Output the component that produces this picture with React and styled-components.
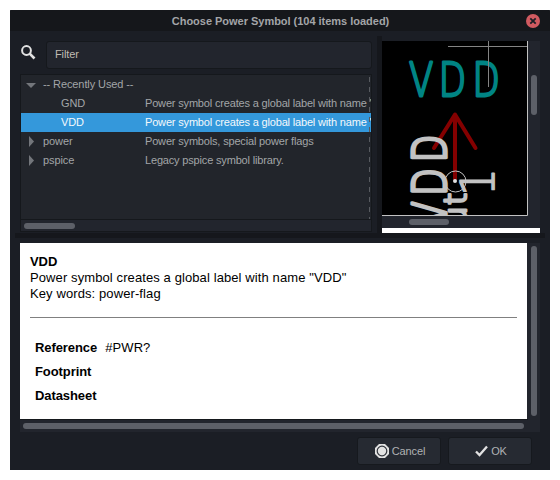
import React from "react";
import styled, { createGlobalStyle } from "styled-components";

const GlobalStyle = createGlobalStyle`
  * { box-sizing: border-box; }
  body {
    margin: 0;
    background: #fff;
    font-family: "Liberation Sans", Arial, sans-serif;
    font-size: 11px;
    color: #a3a5a8;
  }
  svg { display: block; flex: none; }
`;

const Window = styled.main`
  width: 540px;
  height: 460px;
  margin: 10px;
  display: flex;
  flex-direction: column;
  background: #1b1e25;
  border-radius: 1px 1px 0 0;
  overflow: hidden;
`;

const TitleBar = styled.header`
  height: 21px;
  flex: none;
  display: grid;
  grid-template-columns: 24px 1fr 24px;
  align-items: center;
  background: #15171b;
`;

const Title = styled.h1`
  grid-column: 2;
  margin: 0;
  padding: 1px 0 0 1px;
  font-size: 11px;
  line-height: 20px;
  letter-spacing: -0.02px;
  text-align: center;
  white-space: nowrap;
`;

const CloseButton = styled.button`
  width: 14px;
  height: 14px;
  padding: 0;
  border: 0;
  border-radius: 50%;
  background: #d05a60;
`;

const Upper = styled.section`
  height: 202px;
  flex: none;
  display: flex;
  padding: 5px 10px 0;
`;

const Chooser = styled.div`
  width: 352px;
  padding-top: 5px;
  display: flex;
  flex-direction: column;
`;

const FilterRow = styled.div`
  display: flex;
  height: 28px;
  margin-bottom: 5px;
`;

const SearchSlot = styled.div`
  width: 26px;
  padding: 4px 0 0 1px;
`;

const Filter = styled.input`
  flex: 1;
  min-width: 0;
  padding: 0 8px 2px;
  border: 1px solid #15181c;
  border-radius: 3px;
  outline: none;
  background: #22252d;
  color: #c0bcb2;
  font: 11px "Liberation Sans", Arial, sans-serif;
  letter-spacing: -0.12px;
`;

const Tree = styled.div`
  height: 158px;
  display: flex;
  flex-direction: column;
  border: 1px solid #15181c;
  background: #22252b;
  letter-spacing: -0.17px;
`;

const Rows = styled.div`
  position: relative;
  height: 144px;
`;

const ColumnEdge = styled.i`
  position: absolute;
  top: 2px;
  bottom: 0;
  right: 1px;
  width: 1px;
  background: repeating-linear-gradient(to bottom, #585b60 0 5px, transparent 5px 10px);
`;

const Row = styled.div`
  height: 19px;
  display: grid;
  grid-template-columns: 22px 102px 1fr;
  align-items: start;
  background: ${(p) => (p.$selected ? "#3498db" : "transparent")};
  color: ${(p) => (p.$selected ? "#f4f8fb" : "inherit")};
`;

const Name = styled.span`
  padding-left: ${(p) => (p.$child ? 18 : 0)}px;
  letter-spacing: ${(p) => (p.$child ? -0.17 : -0.1)}px;
  white-space: nowrap;
  line-height: 19px;
`;

const Description = styled.span`
  overflow: hidden;
  white-space: nowrap;
  line-height: 19px;
`;

const HScroll = styled.div`
  height: ${(p) => p.$h || 12}px;
  padding: ${(p) => p.$top || 3}px 0 0 ${(p) => p.$start}px;
  border-top: ${(p) => (p.$edge ? "1px solid #15181c" : "0")};
  background: #22252d;
`;

const VScroll = styled.div`
  width: 12px;
  flex: none;
  padding: ${(p) => p.$start}px 0 0 3px;
  background: #22252d;
`;

const Thumb = styled.div`
  width: ${(p) => p.$w || 6}px;
  height: ${(p) => p.$h || 6}px;
  border-radius: 3px;
  background: #5d6068;
`;

const VSplitter = styled.div`
  width: 5px;
  margin-left: 5px;
  background: #15171c;
`;

const HSplitter = styled.div`
  height: 5px;
  flex: none;
  margin: 0 5px;
  background: #15171c;
`;

const Preview = styled.div`
  width: 158px;
  padding-top: 5px;
`;

const PreviewBody = styled.div`
  display: flex;
  height: 187px;
  background: #22252d;
`;

const PreviewMain = styled.div`
  width: 146px;
`;

const PreviewFooter = styled.div`
  height: 5px;
  background: #fff;
`;

const DetailsFrame = styled.section`
  display: flex;
  height: 189px;
  flex: none;
  margin: 5px 10px 0;
  background: #22252d;
`;

const DetailsMain = styled.div`
  width: 508px;
`;

const Details = styled.article`
  width: 507px;
  height: 176px;
  padding: 11px 10px 0;
  background: #fff;
  color: #000;
  font-size: 13px;
  line-height: 16px;
`;

const Line = styled.div`
  font-weight: ${(p) => (p.$strong ? "bold" : "normal")};
  letter-spacing: ${(p) => (p.$strong ? -0.08 : 0.1)}px;
`;

const Rule = styled.hr`
  height: 1px;
  margin: 15px 0 22px;
  border: 0;
  background: #808080;
`;

const Field = styled.div`
  height: 24px;
  padding-left: 5px;
  display: flex;
  gap: 8px;
`;

const Actions = styled.footer`
  display: flex;
  justify-content: flex-end;
  gap: 7px;
  padding: 5px 18px 0 0;
`;

const Button = styled.button`
  width: 84px;
  height: 28px;
  padding: 0 0 0 2px;
  display: flex;
  align-items: center;
  justify-content: center;
  gap: 3px;
  border: 1px solid #16191e;
  border-radius: 3px;
  background: #262a32;
  color: #b0b2b4;
  font: 11px "Liberation Sans", Arial, sans-serif;
  letter-spacing: -0.1px;
`;

const SymbolText = styled.text`
  font-family: "DejaVu Sans", sans-serif;
  font-weight: 200;
  font-size: ${(p) => p.$size || 46}px;
  fill: ${(p) => p.$color};
  stroke: ${(p) => p.$color};
  stroke-width: ${(p) => p.$stroke || 2.8};
  stroke-linejoin: round;
`;

const LABEL = 'Power symbol creates a global label with name "';

const items = [
  { name: "-- Recently Used --", arrow: "down" },
  { name: "GND", child: true, text: LABEL + 'GND"' },
  { name: "VDD", child: true, selected: true, text: LABEL + 'VDD"' },
  { name: "power", arrow: "right", text: "Power symbols, special power flags" },
  { name: "pspice", arrow: "right", text: "Legacy pspice symbol library." },
];

const fields = [
  ["Reference", "#PWR?"],
  ["Footprint", ""],
  ["Datasheet", ""],
];

function Expander({ dir }) {
  return (
    <svg width="22" height="19" fill="#73767b">
      {dir === "down" && <path d="M5 8h10l-5 5z" />}
      {dir === "right" && <path d="M8 4v11l5-5.500z" />}
    </svg>
  );
}

function SymbolCanvas() {
  return (
    <svg width="146" height="175" viewBox="382 41 146 175">
      <rect x="382" y="41" width="146" height="175" fill="#000" />
      <g fill="none" stroke="#840000" strokeWidth="4" strokeLinecap="round" strokeLinejoin="round">
        <path d="M455 115V179M434 148L455 114.500L475.500 148" />
      </g>
      <g transform="translate(409 95.500) scale(.77 1)">
        <SymbolText $color="#008484" x="0 38.500 82.500" y="0">VDD</SymbolText>
      </g>
      <g transform="translate(446 225.500) rotate(-90) scale(.77 1)">
        <SymbolText $color="#c2c2c2" $stroke={3.4} x="0 38.500 82" y="0">VDD</SymbolText>
      </g>
      <g transform="translate(466 227) rotate(-90)">
        <SymbolText $color="#c2c2c2" $size="31" x="1 22" y="0">ut</SymbolText>
      </g>
      <g transform="translate(494 196) rotate(-90) scale(.95 1)">
        <SymbolText $color="#c2c2c2" $stroke={1.8} x="0" y="0">1</SymbolText>
      </g>
      <circle cx="455.500" cy="181.500" r="10.500" fill="none" stroke="#c2c2c2" />
      <circle cx="455" cy="181" r="2" fill="#e0e0e0" />
      <path d="M448 46.500H527M488.500 41V87" stroke="#848484" />
      <path d="M382 215.500H527.500V41" fill="none" stroke="#c2c2c2" />
    </svg>
  );
}

export default function App() {
  return (
    <>
      <GlobalStyle />
      <Window>
        <TitleBar>
          <Title>Choose Power Symbol (104 items loaded)</Title>
          <CloseButton aria-label="Close">
            <svg width="14" height="14" stroke="#1b1e25" strokeWidth="1.8">
              <path d="M4.300 4.300l5.400 5.400m0-5.400l-5.400 5.400" />
            </svg>
          </CloseButton>
        </TitleBar>
        <Upper>
          <Chooser>
            <FilterRow>
              <SearchSlot>
                <svg width="16" height="16" fill="none" stroke="#e2e2e2">
                  <circle cx="5.500" cy="5.500" r="4.400" strokeWidth="2" />
                  <path d="M8.700 8.700L13.500 13.500" strokeWidth="2.600" />
                </svg>
              </SearchSlot>
              <Filter defaultValue="Filter" aria-label="Filter" />
            </FilterRow>
            <Tree>
              <Rows>
                {items.map((it) => (
                  <Row key={it.name} $selected={it.selected}>
                    <Expander dir={it.arrow} />
                    <Name $child={it.child}>{it.name}</Name>
                    <Description>{it.text}</Description>
                  </Row>
                ))}
                <ColumnEdge />
              </Rows>
              <HScroll $edge $h={12} $top={3} $start={3}>
                <Thumb $w={51} />
              </HScroll>
            </Tree>
          </Chooser>
          <VSplitter />
          <Preview>
            <PreviewBody>
              <PreviewMain>
                <SymbolCanvas />
                <HScroll $start={27}>
                  <Thumb $w={40} />
                </HScroll>
              </PreviewMain>
              <VScroll $start={34}>
                <Thumb $h={40} />
              </VScroll>
            </PreviewBody>
            <PreviewFooter />
          </Preview>
        </Upper>
        <HSplitter />
        <DetailsFrame>
          <DetailsMain>
            <Details>
              <Line $strong>VDD</Line>
              <Line>Power symbol creates a global label with name "VDD"</Line>
              <Line>Key words: power-flag</Line>
              <Rule />
              {fields.map(([label, value]) => (
                <Field key={label}>
                  <Line $strong>{label}</Line>
                  <Line>{value}</Line>
                </Field>
              ))}
            </Details>
            <HScroll $edge $h={13} $start={3}>
              <Thumb $w={501} />
            </HScroll>
          </DetailsMain>
          <VScroll $start={3}>
            <Thumb $h={170} />
          </VScroll>
        </DetailsFrame>
        <Actions>
          <Button>
            <svg width="14" height="14">
              <path d="M4 0h6l4 4v6l-4 4H4L0 10V4z" fill="#e2e2e2" />
              <circle cx="7" cy="7" r="4.800" fill="none" stroke="#30343b" strokeWidth="1.200" />
            </svg>
            Cancel
          </Button>
          <Button>
            <svg width="13" height="12" fill="none" stroke="#e2e2e2" strokeWidth="2.300">
              <path d="M1 6.500L4.500 10L12 1.500" />
            </svg>
            OK
          </Button>
        </Actions>
      </Window>
    </>
  );
}
